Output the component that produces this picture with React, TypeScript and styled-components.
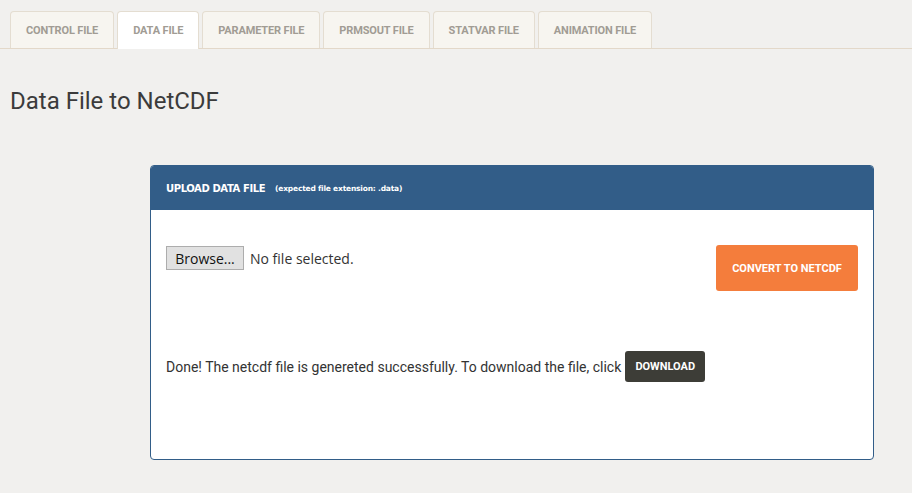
import React from "react";
import styled, { createGlobalStyle } from "styled-components";

const Global = createGlobalStyle`
  html, body { margin: 0; padding: 0; background: #f1f0ee; }
  body { font-family: Roboto, "Liberation Sans", sans-serif; color: #333; }
`;

const Page = styled.div`
  width: 912px;
  min-height: 493px;
  background: #f1f0ee;
`;

const TabBar = styled.ul`
  list-style: none;
  margin: 0;
  padding: 11px 0 0 10px;
  display: flex;
  gap: 3px;
  border-bottom: 1px solid #e3d8c9;
  height: 37px;
  box-sizing: content-box;
`;

const Tab = styled.li<{ $active?: boolean }>`
  box-sizing: border-box;
  padding: 0 15px;
  display: flex;
  align-items: center;
  border: 1px solid #e4ddd1;
  border-bottom: none;
  border-radius: 4px 4px 0 0;
  background: ${(p) => (p.$active ? "#ffffff" : "#f7f5f0")};
  margin-bottom: ${(p) => (p.$active ? "-1px" : "0")};
  height: ${(p) => (p.$active ? "38px" : "37px")};
  font-family: Roboto, "Liberation Sans", sans-serif;
  font-size: 11px;
  font-weight: 700;
  letter-spacing: -0.15px;
  color: #a19c94;
  text-transform: uppercase;
`;

const Title = styled.h1`
  margin: 38px 0 0 10px;
  font-family: Roboto, "Liberation Sans", sans-serif;
  font-weight: 400;
  font-size: 24px;
  line-height: 28px;
  color: #3b3b3b;
`;

const Panel = styled.section`
  margin: 50px 0 0 150px;
  width: 724px;
  box-sizing: border-box;
  border: 1px solid #325d88;
  border-radius: 4px;
  background: #ffffff;
  overflow: hidden;
`;

const PanelHeader = styled.div`
  height: 44px;
  background: #325d88;
  display: flex;
  align-items: center;
  padding-left: 15px;
  gap: 10px;
  color: #ffffff;
`;

const HeaderTitle = styled.span`
  font-family: "DejaVu Sans", Verdana, sans-serif;
  font-weight: 700;
  font-size: 10px;
  letter-spacing: -0.4px;
`;

const HeaderNote = styled.span`
  font-family: "DejaVu Sans", Verdana, sans-serif;
  font-weight: 700;
  font-size: 7.5px;
  letter-spacing: -0.2px;
`;

const PanelBody = styled.div`
  height: 249px;
  box-sizing: border-box;
  padding: 35px 15px 0 15px;
`;

const TopRow = styled.div`
  display: flex;
  justify-content: space-between;
  align-items: flex-start;
`;

const FilePick = styled.div`
  display: flex;
  align-items: center;
  gap: 6px;
  margin-top: 1px;
`;

const BrowseButton = styled.button`
  height: 24px;
  width: 78px;
  padding: 0;
  background: #e1e1e1;
  border: 1px solid #adadad;
  border-radius: 0;
  font-family: "Open Sans", "Noto Sans", sans-serif;
  font-size: 14px;
  color: #111;
`;

const FileLabel = styled.span`
  font-family: "Open Sans", "Noto Sans", sans-serif;
  font-size: 14px;
  color: #333;
`;

const ActionButton = styled.button<{ $tone: "orange" | "dark" }>`
  border: none;
  border-radius: 3px;
  color: #ffffff;
  font-family: Roboto, "Liberation Sans", sans-serif;
  font-weight: 700;
  text-transform: uppercase;
  background: ${(p) => (p.$tone === "orange" ? "#f47d3c" : "#3d3d37")};
  height: ${(p) => (p.$tone === "orange" ? "46px" : "31px")};
  width: ${(p) => (p.$tone === "orange" ? "142px" : "80px")};
  font-size: 11px;
  padding: 0;
`;

const DoneRow = styled.div`
  margin-top: 60px;
  display: flex;
  align-items: center;
  gap: 4px;
`;

const DoneText = styled.span`
  font-family: Roboto, "Liberation Sans", sans-serif;
  font-size: 14px;
  color: #333;
`;

const tabs = [
  "Control File",
  "Data File",
  "Parameter File",
  "PRMSOUT File",
  "STATVAR File",
  "Animation File",
];

export default function App() {
  return (
    <Page>
      <Global />
      <TabBar>
        {tabs.map((t) => (
          <Tab key={t} $active={t === "Data File"}>
            {t}
          </Tab>
        ))}
      </TabBar>
      <Title>Data File to NetCDF</Title>
      <Panel>
        <PanelHeader>
          <HeaderTitle>UPLOAD DATA FILE</HeaderTitle>
          <HeaderNote>(expected file extension: .data)</HeaderNote>
        </PanelHeader>
        <PanelBody>
          <TopRow>
            <FilePick>
              <BrowseButton>Browse...</BrowseButton>
              <FileLabel>No file selected.</FileLabel>
            </FilePick>
            <ActionButton $tone="orange">Convert to NetCDF</ActionButton>
          </TopRow>
          <DoneRow>
            <DoneText>
              Done! The netcdf file is genereted successfully. To download the file, click
            </DoneText>
            <ActionButton $tone="dark">Download</ActionButton>
          </DoneRow>
        </PanelBody>
      </Panel>
    </Page>
  );
}
